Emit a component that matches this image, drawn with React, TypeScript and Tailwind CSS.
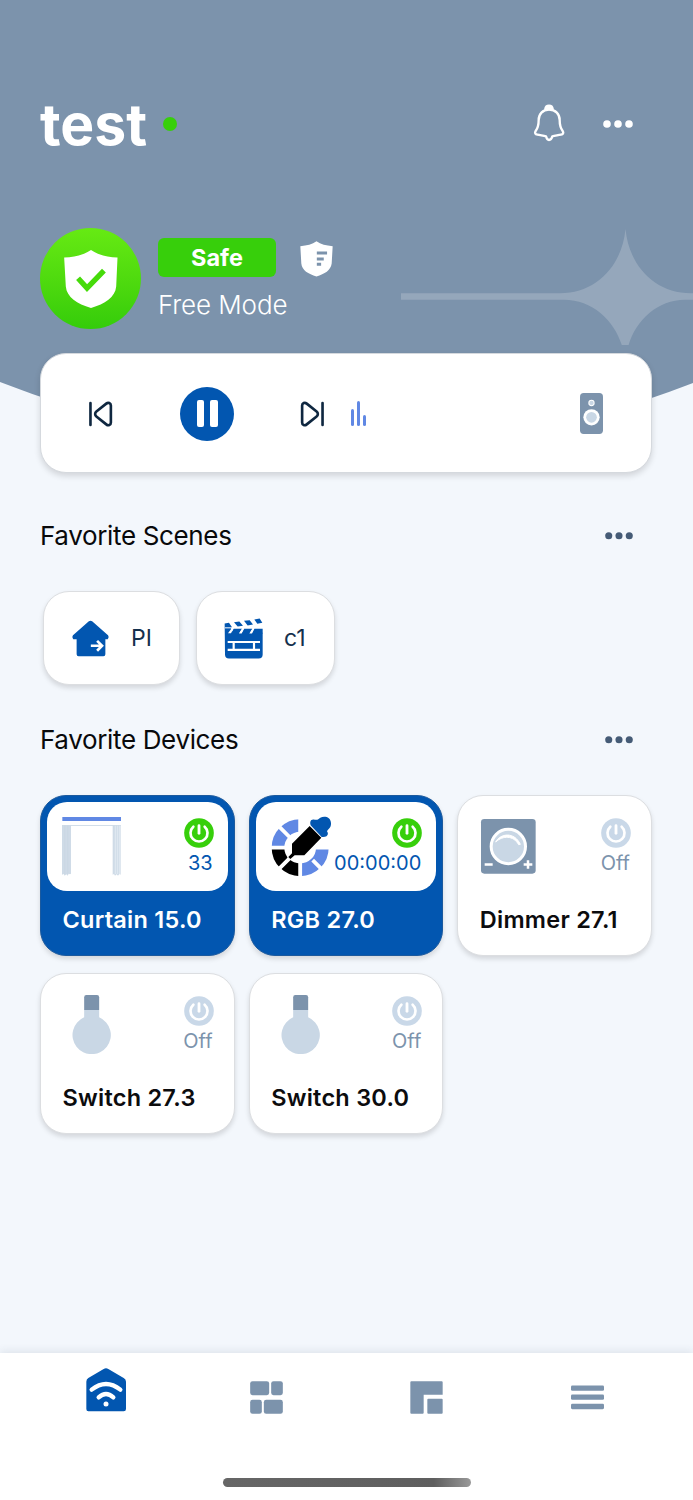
import type { ReactNode } from 'react';
import clsx from 'clsx';

type IconProps = { className?: string };

function Backdrop() {
  return (
    <svg className="absolute inset-x-0 top-0 h-[460px] w-full" viewBox="0 0 693 460" fill="none">
      <path d="M0 0H693V383Q346.500 517 0 382Z" fill="#7c93ac" />
      <path
        d="M401 293.300H560C596 293.300 622 266 625.500 229C629 266 655 293.300 691 293.300H693V299.700H685C658 299.700 636 320 628.600 345H621.800C614 320 592 299.700 564 299.700H401Z"
        fill="#95a7bb"
      />
    </svg>
  );
}

function Dots({ className }: IconProps) {
  return (
    <svg className={className} viewBox="0 0 30 8" fill="currentColor">
      <circle cx="4" cy="4" r="3.800" />
      <circle cx="15" cy="4" r="3.800" />
      <circle cx="26" cy="4" r="3.800" />
    </svg>
  );
}

function BellIcon() {
  return (
    <svg className="h-[38px] w-8" viewBox="457 70 96 114" fill="none" stroke="#fff" strokeWidth="7" strokeLinejoin="round">
      <path d="M505 87C486 87 474 100 474 118C474 136 471 143 465 151C461 157 464 161 470 162C479 164 488 165 496 167C498 175 501 178 505 178C509 178 513 175 515 167C523 165 532 164 541 162C547 161 550 157 546 151C540 143 537 136 537 118C537 100 525 87 505 87Z" />
      <path d="M494 85C495 77 499 75 505 75C511 75 515 77 516 85Z" fill="#fff" />
    </svg>
  );
}

function ShieldCheck() {
  return (
    <svg className="h-[58px] w-[54px]" viewBox="191 512 162 175" fill="none">
      <path d="M272 512C249 527 223 533 191 535L196 622C199 655 230 674 272 687C314 674 345 655 348 622L352 535C320 533 295 527 272 512Z" fill="#fff" />
      <path d="M233 597L260 627L311 574" stroke="#46db0a" strokeWidth="16" />
    </svg>
  );
}

function ShieldList() {
  return (
    <svg className="mt-[2px] h-9 w-[33px]" viewBox="899 482 100 108" fill="none">
      <path d="M949 482C936 492 920 495 900 497L903 550C905 571 924 582 949 589C974 582 992 571 995 550L998 497C978 495 962 492 949 482Z" fill="#fff" />
      <path d="M950 518H981M950 536H971M950 552H963" stroke="#7c93ac" strokeWidth="9" />
    </svg>
  );
}

function SkipIcon({ className }: IconProps) {
  return (
    <svg className={className} viewBox="902 181 75 79" fill="none" stroke="#0f2740" strokeWidth="8" strokeLinecap="round">
      <path d="M970 187V254" />
      <path d="M908 195V246C908 255 916 257 922 252L952 228C957 224 957 217 952 213L922 189C916 184 908 187 908 195Z" />
    </svg>
  );
}

function SpeakerIcon() {
  return (
    <svg className="h-[41px] w-[23px]" viewBox="541 69 69 123">
      <rect x="541" y="69" width="69" height="123" rx="11" fill="#7c93ac" />
      <circle cx="575.500" cy="99" r="9.500" fill="#fff" />
      <circle cx="575.500" cy="99" r="6.500" fill="#c9d7e5" />
      <circle cx="575.500" cy="142" r="24.500" fill="#fff" />
      <circle cx="575.500" cy="142" r="16" fill="#c9d7e5" />
    </svg>
  );
}

function HouseArrow() {
  return (
    <svg className="h-[37px] w-[37px]" viewBox="127 329 112 110" fill="none">
      <path d="M178 332Q183 328 188 332L236 374Q240 380 235 386H228V432Q228 438 222 438H147Q141 438 141 432V386H131Q126 380 130 374Z" fill="#0256b0" />
      <path d="M184 406H216M203 391L218 406L203 421" stroke="#fff" strokeWidth="8" />
    </svg>
  );
}

function ClapperIcon() {
  return (
    <svg className="h-[41px] w-[39px]" viewBox="583 322 117 122">
      <path d="M585 338L598 336L607 349L604 352L609 366H699V431Q699 443 687 443H598Q586 443 586 431Z" fill="#0256b0" />
      <path d="M613 334L629 332L640 345L624 347ZM643 330L660 328L670 341L654 344ZM674 326L690 323L698 336L683 339Z" fill="#0256b0" />
      <path d="M612 354H637L628 368H604ZM643 354H668L660 368H635ZM673 354H699V368H666Z" fill="#0256b0" />
      <path d="M606 352H612L604 367H595ZM638 352H644L636 368H628ZM669 352H675L667 368H659Z" fill="#fff" />
      <path d="M586 351H608" stroke="#fff" strokeWidth="3" />
      <path d="M594 393.500H691M594 417H691M612 393V417M673 393V417" stroke="#fff" strokeWidth="6.500" />
    </svg>
  );
}

function PowerIcon({ on }: { on: boolean }) {
  return (
    <svg className={clsx('size-[30px]', on ? 'text-[#37cf0b]' : 'text-[#c9d8e8]')} viewBox="0 0 90 90" fill="none">
      <circle cx="45" cy="45" r="44.500" fill="currentColor" />
      <path d="M28 26A25.500 25.500 0 1 0 62 26" stroke="#fff" strokeWidth="8" strokeLinecap="round" />
      <path d="M45 23V46" stroke="#fff" strokeWidth="8.500" strokeLinecap="round" />
    </svg>
  );
}

function CurtainIcon() {
  return (
    <svg className="size-[60px]" viewBox="96 93 180 180" fill="none">
      <rect x="97" y="96" width="176" height="12" fill="#6088e4" />
      <path d="M97 121.500H272" stroke="#c9d7e5" strokeWidth="2.500" />
      <path d="M96 120H123V266L120 268L116 266L113 272L109 268L104 272L101 267L96 269Z" fill="#cfdbe7" />
      <path d="M248 120H272V269L268 267L264 272L260 268L255 272L252 267L248 269Z" fill="#cfdbe7" />
      <path d="M104 122V267M113 122V267" stroke="#bfcfdf" strokeWidth="1" />
      <path d="M256 122V267M262 122V267M268 122V267" stroke="#f2f6fa" strokeWidth="1.500" />
    </svg>
  );
}

function RgbIcon() {
  return (
    <svg className="h-[61px] w-[60px]" viewBox="90 93 180 183" fill="none">
      <g strokeWidth="38">
        <path d="M111 188A66.500 66.500 0 0 1 177.500 121.500" stroke="#6088e4" />
        <path d="M111 188A66.500 66.500 0 0 0 177.500 254.500" stroke="#000" />
        <path d="M177.500 254.500A66.500 66.500 0 0 0 244 188" stroke="#6088e4" />
      </g>
      <path d="M177.500 93V150M177.500 225V276M90 188H140M210 188H270M110 120.500L150 160.500M215 225.500L250 260.500M105 260.500L150 215.500" stroke="#fff" strokeWidth="11.500" />
      <path d="M153 176L206 123L241 158L190 211H161L148 222L142 216L153 205Z" fill="#000" stroke="#fff" strokeWidth="5" paintOrder="stroke" />
      <path d="M209 121C205 109 210 102 221 104C230 106 232 102 238 98C250 92 271 95 270 117C270 129 261 132 258 139C266 151 255 158 242 156Z" fill="#0256b0" />
    </svg>
  );
}

function DimmerIcon() {
  return (
    <svg className="size-[60px]" viewBox="88 93 180 180" fill="none">
      <rect x="94" y="102" width="164" height="164" rx="10" fill="#7c93ac" />
      <circle cx="176" cy="184.500" r="51.500" fill="#c9d7e5" stroke="#fff" strokeWidth="9" />
      <path d="M138 171C152 145 194 139 212 178L207 179C191 151 160 151 138 171Z" fill="#fff" stroke="#fff" strokeWidth="3" />
      <path d="M105 238.500H129M222 238.500H248M235 226V251" stroke="#fff" strokeWidth="7.500" />
    </svg>
  );
}

function BulbIcon() {
  return (
    <svg className="size-[60px]" viewBox="96 87 180 180">
      <path d="M162.500 135H207.500V157A57.500 57.500 0 1 1 162.500 157Z" fill="#c9d7e5" />
      <path d="M162.500 135V97Q162.500 90 169 90H201Q207.500 90 207.500 97V135Z" fill="#7c93ac" />
    </svg>
  );
}

type Device = {
  name: string;
  status: string;
  on: boolean;
  icon: ReactNode;
};

const DEVICES: Device[] = [
  { name: 'Curtain 15.0', status: '33', on: true, icon: <CurtainIcon /> },
  { name: 'RGB 27.0', status: '00:00:00', on: true, icon: <RgbIcon /> },
  { name: 'Dimmer 27.1', status: 'Off', on: false, icon: <DimmerIcon /> },
  { name: 'Switch 27.3', status: 'Off', on: false, icon: <BulbIcon /> },
  { name: 'Switch 30.0', status: 'Off', on: false, icon: <BulbIcon /> },
];

const SCENES = [
  { name: 'PI', icon: <HouseArrow />, className: 'w-[137px] pl-7 gap-[22px]' },
  { name: 'c1', icon: <ClapperIcon />, className: 'w-[139px] pl-[27px] gap-[21px]' },
];

function DeviceCard({ device }: { device: Device }) {
  return (
    <div
      className={clsx(
        'h-[161px] rounded-[26px] border p-[6px] shadow-[0_3px_5px_rgba(0,0,0,0.13)]',
        device.on ? 'border-[#1c5a9e] bg-[#0256b0]' : 'border-[#dcdee1] bg-white'
      )}
    >
      <div className="flex h-[89px] justify-between rounded-[20px] bg-white pt-[13px] pr-[14px] pl-[15px]">
        <div className="w-[60px] shrink-0 pt-px">{device.icon}</div>
        <div className="flex w-0 flex-col items-end pt-[3px]">
          <PowerIcon on={device.on} />
          <span
            className={clsx(
              'mt-[3px] pr-px text-[20px] leading-6 whitespace-nowrap',
              device.on ? 'text-[#0256b0]' : 'text-[#7c93ac]'
            )}
          >
            {device.status}
          </span>
        </div>
      </div>
      <h3
        className={clsx(
          'mt-[13px] pl-[15.500px] text-[23.500px] leading-8 font-semibold tracking-[0.25px] whitespace-nowrap',
          device.on ? 'text-white' : 'text-[#0c0c0e]'
        )}
      >
        {device.name}
      </h3>
    </div>
  );
}

function SectionTitle({ children }: { children: ReactNode }) {
  return (
    <div className="flex h-10 items-center justify-between pr-[19px]">
      <h2 className="-mt-[2px] text-[26px] tracking-[-0.350px] text-[#08090b]">{children}</h2>
      <Dots className="h-[7.500px] w-7 text-[#455b76]" />
    </div>
  );
}

function TabBar() {
  return (
    <nav className="flex h-[147px] flex-col bg-white shadow-[0_-2px_8px_rgba(40,60,90,0.10)]">
      <div className="grid grid-cols-4 justify-items-center px-[25px] pt-[15px]">
        <svg className="ml-px h-11 w-10" viewBox="77 83 120 132" fill="none">
          <path d="M130 86Q137 82 144 86L190 113Q197 117 197 124V206Q197 213 190 213H84Q78 213 78 206V124Q78 117 84 113Z" fill="#0256b0" />
          <path d="M94 148Q137 114 180 148M115 171Q137 151 159 171" stroke="#fff" strokeWidth="13" strokeLinecap="round" />
          <circle cx="137" cy="191" r="7.500" fill="#fff" />
        </svg>
        <svg className="mt-[13px] h-[33px] w-[33px]" viewBox="569.500 123.500 99 99" fill="#7c93ac">
          <rect x="570" y="124" width="57" height="42" rx="7" />
          <rect x="633" y="124" width="35" height="42" rx="7" />
          <rect x="570" y="180" width="35" height="42" rx="7" />
          <rect x="611" y="180" width="57" height="42" rx="7" />
        </svg>
        <svg className="mt-[13px] h-[33px] w-[33px]" viewBox="89 123.500 99 99" fill="#7c93ac">
          <path d="M93 124H184Q187 124 187 127V165H130V219Q130 222 127 222H93Q90 222 90 219V127Q90 124 93 124Z" />
          <rect x="141" y="177" width="46" height="45" rx="3" />
        </svg>
        <svg className="mt-[17px] h-[25px] w-[33px]" viewBox="573 136.500 99 75" fill="#7c93ac">
          <rect x="573" y="138" width="99" height="16" rx="4" />
          <rect x="573" y="165" width="99" height="16" rx="4" />
          <rect x="573" y="193" width="99" height="16" rx="4" />
        </svg>
      </div>
      <div className="mx-auto mt-auto mb-[13px] h-[9px] w-[248px] rounded-full bg-gradient-to-r from-[#666] via-[#5e5e5e] via-85% to-[#999]" />
    </nav>
  );
}

export default function App() {
  return (
    <div className="relative flex h-[1500px] w-[693px] flex-col overflow-hidden bg-[#f3f7fc] font-['Inter',sans-serif]">
      <Backdrop />
      <main className="relative flex-1 pt-[94px] pr-[41px] pl-10">
        <header className="flex h-[60px] items-center">
          <h1 className="pt-[2px] text-[57px] leading-[60px] font-bold text-white">test</h1>
          <span className="ml-4 size-[14px] rounded-full bg-[#37cf0b]" />
          <div className="mr-[19.500px] ml-auto flex items-center gap-[38px]">
            <div className="-mt-[2px]">
              <BellIcon />
            </div>
            <Dots className="h-2 w-[30px] text-white" />
          </div>
        </header>

        <section className="mt-[74px] flex h-[100px] text-white">
          <div className="flex size-[101px] items-center justify-center rounded-full bg-gradient-to-b from-[#66ea13] to-[#34cc0a] pt-px">
            <ShieldCheck />
          </div>
          <div className="ml-[17px] pt-[10px]">
            <div className="flex items-center gap-6">
              <span className="flex h-[39px] w-[118px] items-center justify-center rounded-[6px] bg-[#37cf0b] text-[23.500px] font-bold">
                Safe
              </span>
              <ShieldList />
            </div>
            <p className="mt-[12px] text-[26px] leading-8 font-light tracking-[-0.1px]">Free Mode</p>
          </div>
        </section>

        <section className="mt-[25px] flex h-[120px] items-center rounded-[26px] border border-[#d5d9de] bg-white pt-px pr-[48px] pl-[47px] shadow-[0_3px_6px_rgba(0,0,0,0.14)]">
          <SkipIcon className="h-[26px] w-[25px] -scale-x-100" />
          <div className="ml-[67px] flex size-[54px] items-center justify-center gap-[6px] rounded-full bg-[#0256b0]">
            <span className="h-[27px] w-[7.500px] rounded-[2px] bg-white" />
            <span className="h-[27px] w-[7.500px] rounded-[2px] bg-white" />
          </div>
          <SkipIcon className="ml-[66px] h-[26px] w-[25px]" />
          <div className="ml-[26px] flex h-[25px] items-end gap-[3px]">
            <span className="h-[17px] w-[3px] rounded-full bg-[#6088e4]" />
            <span className="h-[25px] w-[3px] rounded-full bg-[#6088e4]" />
            <span className="h-[11px] w-[3px] rounded-full bg-[#6088e4]" />
          </div>
          <div className="ml-auto">
            <SpeakerIcon />
          </div>
        </section>

        <div className="mt-[43px]">
          <SectionTitle>Favorite Scenes</SectionTitle>
        </div>
        <div className="mt-[35px] ml-[3px] flex gap-4">
          {SCENES.map((scene) => (
            <div
              key={scene.name}
              className={clsx(
                'flex h-[94px] items-center rounded-[26px] border border-[#dcdee1] bg-white text-[23px] text-[#14304d] shadow-[0_3px_5px_rgba(0,0,0,0.13)]',
                scene.className
              )}
            >
              {scene.icon}
              <span>{scene.name}</span>
            </div>
          ))}
        </div>

        <div className="mt-[35px]">
          <SectionTitle>Favorite Devices</SectionTitle>
        </div>
        <div className="mt-[35px] grid grid-cols-3 gap-x-[14px] gap-y-[17px]">
          {DEVICES.map((device) => (
            <DeviceCard key={device.name} device={device} />
          ))}
        </div>
      </main>
      <TabBar />
    </div>
  );
}
